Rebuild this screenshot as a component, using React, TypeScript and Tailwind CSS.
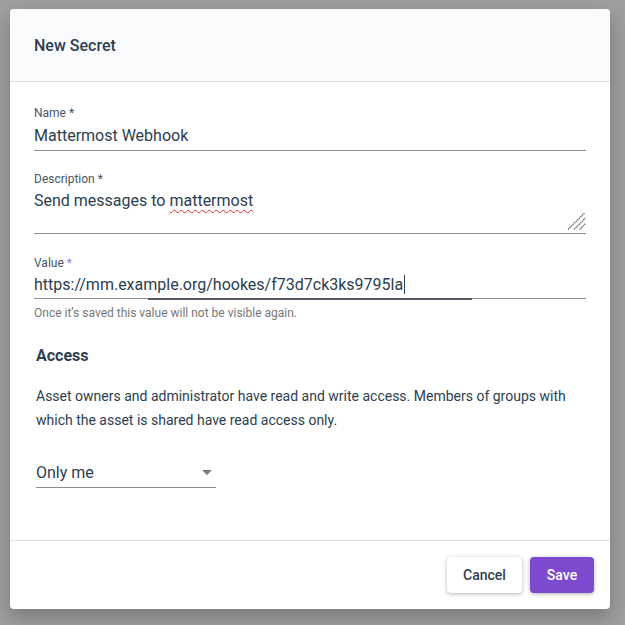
const Field = ({ label, children, purpleStar }: { label: string; children: React.ReactNode; purpleStar?: boolean }) => (
  <div>
    <div className="text-[12px] leading-4 text-[#4a5566]">
      {label} <span className={purpleStar ? "text-[#9c7ae0]" : ""}>*</span>
    </div>
    {children}
  </div>
)

const ResizeHandle = () => (
  <svg width="19" height="17" viewBox="0 0 19 17" className="absolute right-0 bottom-[3px]">
    <g stroke="#6f6f6f" strokeWidth="1.3" strokeDasharray="1.6 0.6">
      <line x1="1" y1="16.5" x2="17.5" y2="0" />
      <line x1="7" y1="16.5" x2="18.5" y2="5" />
      <line x1="12.5" y1="16.5" x2="18.5" y2="10.5" />
    </g>
  </svg>
)

const App = () => {
  return (
    <div className="min-h-screen bg-[#9f9f9f] px-[10px] pt-[9px] font-['Roboto',sans-serif] text-[#2c3e50]">
      <div className="w-[600px] overflow-hidden rounded-[4px] bg-white shadow-[0_8px_20px_rgba(0,0,0,0.25)]">
        <div className="flex h-[73px] items-center border-b border-[#dcdfe3] bg-[#fafbfc] px-6 pt-[2px]">
          <h2 className="text-[16px] font-medium">New Secret</h2>
        </div>

        <div className="px-6 pt-[23px] pb-[52px]">
          <Field label="Name">
            <div className="flex h-[30px] items-center border-b border-[#8e8e8e] text-[16px]">
              Mattermost Webhook
            </div>
          </Field>

          <div className="mt-5">
            <Field label="Description">
              <div className="relative h-[47px] border-b border-[#8e8e8e] pt-[2px] text-[16px] leading-6">
                Send messages to{" "}
                <span className="underline decoration-[#e03030] decoration-wavy decoration-1 underline-offset-[3px]">
                  mattermost
                </span>
                <ResizeHandle />
              </div>
            </Field>
          </div>

          <div className="mt-[21px]">
            <Field label="Value" purpleStar>
              <div className="relative flex h-[28px] items-center border-b border-[#8e8e8e] text-[16px]">
                <span>https://mm.example.org/hookes/f73d7ck3ks9795la</span>
                <span className="ml-[1px] h-[19px] w-px bg-[#2c3e50]" />
                <div className="absolute bottom-[-2px] left-[114px] h-[2px] w-[324px] bg-[#555b66]" />
              </div>
            </Field>
            <p className="mt-[6px] text-[12px] leading-4 text-[#777]">
              Once it’s saved this value will not be visible again.
            </p>
          </div>

          <div className="px-[2px]">
            <h3 className="mt-[23px] text-[16px] leading-6 font-bold">Access</h3>
            <p className="mt-4 text-[14px] leading-6">
              Asset owners and administrator have read and write access. Members of groups with which the asset is
              shared have read access only.
            </p>
            <div className="mt-[27px] flex h-[29px] w-[180px] items-center justify-between border-b border-[#8e8e8e] text-[16px]">
              <span>Only me</span>
              <svg width="10" height="5" viewBox="0 0 10 5" className="mr-[4px] mb-[2px]">
                <path d="M0 0h10L5 5z" fill="#7a7a7a" />
              </svg>
            </div>
          </div>
        </div>

        <div className="flex h-[69px] items-center justify-end gap-2 border-t border-[#dcdfe3] px-4">
          <button className="h-9 w-[75px] rounded-[4px] bg-white text-[14px] font-medium text-[#2c3e50] shadow-[0_1px_4px_rgba(0,0,0,0.3)]">
            Cancel
          </button>
          <button className="h-9 w-16 rounded-[4px] bg-[#7c4bcf] text-[14px] font-medium text-white shadow-[0_1px_4px_rgba(0,0,0,0.3)]">
            Save
          </button>
        </div>
      </div>
    </div>
  )
}

export default App
